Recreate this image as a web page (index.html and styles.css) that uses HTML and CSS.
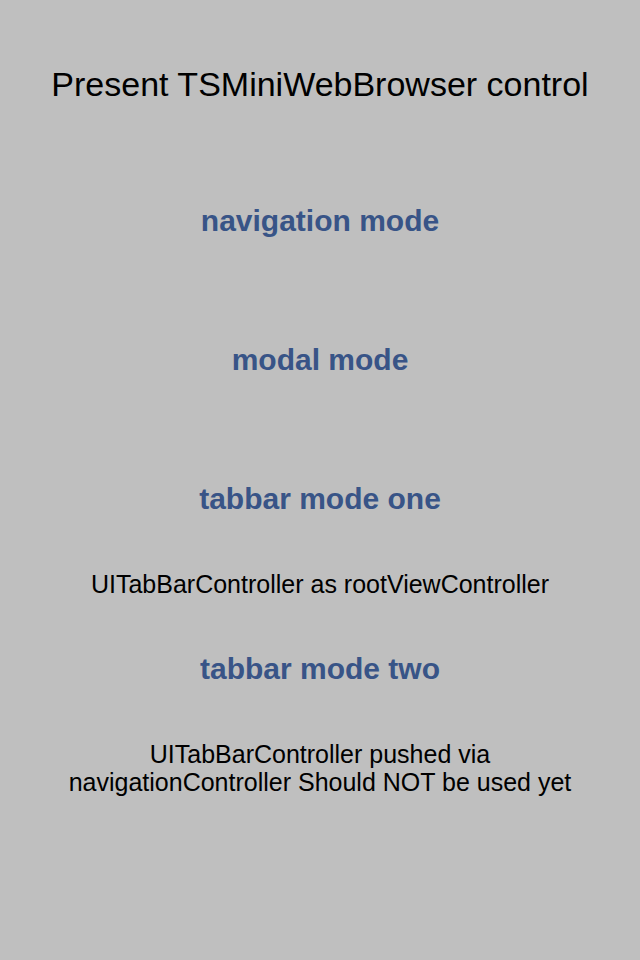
FILE: index.html
```html
<!DOCTYPE html>
<html lang="en">
<head>
<meta charset="utf-8">
<meta name="viewport" content="width=device-width, initial-scale=1">
<title>TSMiniWebBrowser</title>
<link rel="stylesheet" href="styles.css">
</head>
<body>
<main class="screen">
  <h1 class="title">Present TSMiniWebBrowser control</h1>
  <div class="modes">
    <button class="mode" type="button">navigation mode</button>
    <button class="mode" type="button">modal mode</button>
    <section class="option">
      <button class="mode" type="button" aria-describedby="note-one">tabbar mode one</button>
      <p class="note" id="note-one">UITabBarController as rootViewController</p>
    </section>
    <section class="option">
      <button class="mode" type="button" aria-describedby="note-two">tabbar mode two</button>
      <p class="note" id="note-two">UITabBarController pushed via navigationController Should NOT be used yet</p>
    </section>
  </div>
</main>
</body>
</html>
```

FILE: styles.css
```css
* {
  box-sizing: border-box;
}

body {
  margin: 0;
  min-height: 100vh;
  background: #bfbfbf;
  color: #000;
  font-family: "Liberation Sans", Arial, sans-serif;
}

.screen {
  padding: 64px 40px;
  text-align: center;
}

.title {
  margin: 0 0 73px;
  font-size: 34px;
  line-height: 40px;
  font-weight: 400;
}

.modes {
  display: flex;
  flex-direction: column;
  align-items: center;
}

.mode {
  margin: 0 0 51px;
  padding: 0 16px;
  height: 88px;
  border: 0;
  background: none;
  color: #385487;
  font: bold 30px/40px "Liberation Sans", Arial, sans-serif;
}

.option {
  max-width: 540px;
}

.option .mode {
  margin: 0;
}

.note {
  margin: 27px 0;
  font-size: 25px;
  line-height: 28px;
}
```
